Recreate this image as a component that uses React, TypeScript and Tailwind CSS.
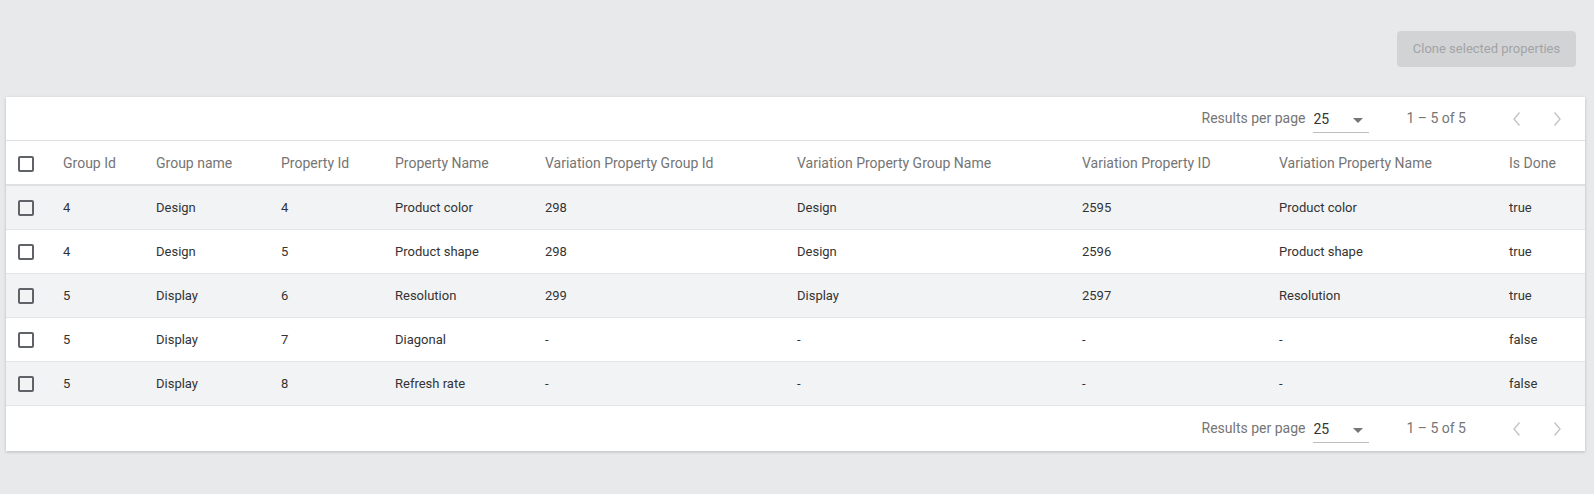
import React from 'react';

interface Row {
    groupId: string;
    groupName: string;
    propertyId: string;
    propertyName: string;
    varGroupId: string;
    varGroupName: string;
    varPropertyId: string;
    varPropertyName: string;
    isDone: string;
}

const rows: Row[] = [
    { groupId: '4', groupName: 'Design', propertyId: '4', propertyName: 'Product color', varGroupId: '298', varGroupName: 'Design', varPropertyId: '2595', varPropertyName: 'Product color', isDone: 'true' },
    { groupId: '4', groupName: 'Design', propertyId: '5', propertyName: 'Product shape', varGroupId: '298', varGroupName: 'Design', varPropertyId: '2596', varPropertyName: 'Product shape', isDone: 'true' },
    { groupId: '5', groupName: 'Display', propertyId: '6', propertyName: 'Resolution', varGroupId: '299', varGroupName: 'Display', varPropertyId: '2597', varPropertyName: 'Resolution', isDone: 'true' },
    { groupId: '5', groupName: 'Display', propertyId: '7', propertyName: 'Diagonal', varGroupId: '-', varGroupName: '-', varPropertyId: '-', varPropertyName: '-', isDone: 'false' },
    { groupId: '5', groupName: 'Display', propertyId: '8', propertyName: 'Refresh rate', varGroupId: '-', varGroupName: '-', varPropertyId: '-', varPropertyName: '-', isDone: 'false' },
];

const headers = [
    'Group Id',
    'Group name',
    'Property Id',
    'Property Name',
    'Variation Property Group Id',
    'Variation Property Group Name',
    'Variation Property ID',
    'Variation Property Name',
    'Is Done',
];

const gridCols = 'grid grid-cols-[57px_93px_125px_114px_150px_252px_285px_197px_230px_1fr]';

const Checkbox = () => (
    <div className="pl-[12px] flex items-center">
        <span className="block w-[16px] h-[16px] border-2 border-[#5f6368] rounded-[2px]" />
    </div>
);

const Chevron = ({ dir }: { dir: 'left' | 'right' }) => (
    <svg width="10" height="16" viewBox="0 0 10 16" fill="none">
        <path
            d={dir === 'left' ? 'M7.5 1.5 L2 8 L7.5 14.5' : 'M2.5 1.5 L8 8 L2.5 14.5'}
            stroke="#c4c4c4"
            strokeWidth="1.4"
        />
    </svg>
);

const Paginator = ({ border }: { border: 'top' | 'bottom' }) => (
    <div
        className={`flex items-center justify-end text-[14px] ${
            border === 'bottom' ? 'h-[44px] border-b border-[#e0e0e0]' : 'h-[45px]'
        }`}
    >
        <span className="text-[#757575]">Results per page</span>
        <div className="ml-[8px] w-[56px] h-[28px] relative border-b border-[#bdbdbd] flex items-center">
            <span className="text-[#333] mt-[2px]">25</span>
            <span className="absolute right-[6px] top-[13px] w-0 h-0 border-l-[5px] border-r-[5px] border-t-[5px] border-l-transparent border-r-transparent border-t-[#757575]" />
        </div>
        <span className="ml-[37px] text-[#757575]">1 – 5 of 5</span>
        <div className="ml-[46px] flex items-center">
            <Chevron dir="left" />
        </div>
        <div className="ml-[30px] mr-[23px] flex items-center">
            <Chevron dir="right" />
        </div>
    </div>
);

export default function App() {
    return (
        <div
            className="min-h-[494px] bg-[#e8e9eb] pt-[31px] pl-[6px] pr-[9px]"
            style={{ fontFamily: 'Roboto, "Liberation Sans", sans-serif' }}
        >
            <div className="flex justify-end pr-[9px]">
                <button className="h-[36px] w-[179px] rounded-[4px] bg-[#d2d3d5] text-[#a3a4a6] text-[13px]">
                    Clone selected properties
                </button>
            </div>

            <div className="mt-[30px] bg-white shadow-[0_1px_3px_rgba(0,0,0,0.2)]">
                <Paginator border="bottom" />

                <div className={`${gridCols} h-[45px] pt-[2px] items-center border-b-2 border-[#e0e0e0] text-[14px] text-[#757575]`}>
                    <Checkbox />
                    {headers.map(h => (
                        <span key={h} className="whitespace-nowrap">{h}</span>
                    ))}
                </div>

                {rows.map((r, i) => (
                    <div
                        key={i}
                        className={`${gridCols} h-[44px] pt-[1px] items-center border-b border-[#e4e4e4] text-[13px] text-[#333] ${
                            i % 2 === 0 ? 'bg-[#f2f3f5]' : 'bg-white'
                        }`}
                    >
                        <Checkbox />
                        <span>{r.groupId}</span>
                        <span>{r.groupName}</span>
                        <span>{r.propertyId}</span>
                        <span>{r.propertyName}</span>
                        <span>{r.varGroupId}</span>
                        <span>{r.varGroupName}</span>
                        <span>{r.varPropertyId}</span>
                        <span>{r.varPropertyName}</span>
                        <span>{r.isDone}</span>
                    </div>
                ))}

                <Paginator border="top" />
            </div>
        </div>
    );
}
